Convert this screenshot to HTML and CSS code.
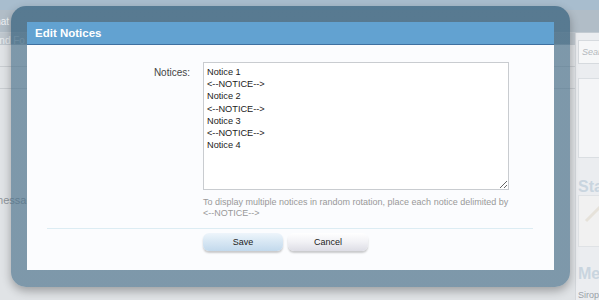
FILE: index.html
```html
<!DOCTYPE html>
<html>
<head>
<meta charset="utf-8">
<title>Edit Notices</title>
<link rel="stylesheet" href="styles.css">
</head>
<body>
<div class="page">
  <div class="hdr"></div>
  <div class="nav"><span class="tab">Chat</span></div>
  <div class="main">
    <div class="content">
      <div class="subnav">Find Fo</div>
      <div class="row"></div>
      <div class="row"></div>
      <div class="row tall"></div>
      <div class="msg">messag</div>
    </div>
    <aside class="sidebar">
      <div class="search">Search...</div>
      <div class="box"></div>
      <h3 class="sidehead">Staff Online</h3>
      <div class="box2"><svg class="pen" width="22" height="22" viewBox="0 0 22 22"><path d="M3 19 L17 5" stroke="#e6e2da" stroke-width="3" fill="none"/></svg></div>
      <h3 class="sidehead">Members Online</h3>
      <p class="sidetext">Siropu</p>
    </aside>
  </div>
</div>

<div class="overlay">
  <div class="dialog">
    <h2 class="title">Edit Notices</h2>
    <div class="body">
      <div class="field">
        <label class="label" for="notices">Notices:</label>
        <div class="ctrl">
          <textarea id="notices" class="ta">Notice 1
&lt;--NOTICE--&gt;
Notice 2
&lt;--NOTICE--&gt;
Notice 3
&lt;--NOTICE--&gt;
Notice 4</textarea>
          <p class="hint">To display multiple notices in random rotation, place each notice delimited by <span class="nw">&lt;--NOTICE--&gt;</span></p>
        </div>
      </div>
      <div class="sep"></div>
      <div class="buttons">
        <button class="btn save">Save</button>
        <button class="btn cancel">Cancel</button>
      </div>
    </div>
  </div>
</div>
</body>
</html>
```

FILE: styles.css
```css
html, body {
  margin: 0;
  padding: 0;
}
body {
  width: 599px;
  height: 300px;
  overflow: hidden;
  position: relative;
  background: #e2e5e8;
  font-family: "Liberation Sans", Arial, sans-serif;
}
.page {
  width: 599px;
  height: 300px;
  overflow: hidden;
}
.hdr {
  height: 10px;
  background: #a8bdce;
}
.nav {
  height: 23px;
  background: #b1bdc7;
  display: flex;
  align-items: center;
  font-size: 10px;
  color: #eef2f5;
  border-bottom: 1px solid #c3cbd2;
  box-sizing: border-box;
}
.tab { margin-left: -12px; }
.main {
  display: flex;
  height: 267px;
}
.content {
  flex: 0 0 575px;
  background: #e0e3e6;
}
.subnav {
  height: 12px;
  background: #bfc7ce;
  font-size: 10px;
  line-height: 16px;
  overflow: hidden;
  color: #e9edf0;
  text-indent: -9px;
}
.row {
  height: 21px;
  border-bottom: 1px solid #c9cdd1;
}
.row.tall { height: 104px; border-bottom: none; }
.msg {
  margin-left: -6px;
  font-size: 11px;
  color: #8f959b;
  line-height: 14px;
}
.sidebar {
  flex: 0 0 200px;
  background: #ebedf0;
  border-left: 1px solid #d4d8dc;
  padding: 7px 0 0 2px;
  box-sizing: border-box;
}
.search {
  height: 24px;
  width: 180px;
  box-sizing: border-box;
  border: 1px solid #d6dade;
  background: #f6f7f8;
  font-size: 9px;
  font-style: italic;
  color: #b3b8bd;
  line-height: 22px;
  padding-left: 3px;
}
.box {
  margin-top: 14px;
  height: 80px;
  width: 180px;
  box-sizing: border-box;
  border: 1px solid #dadee2;
  background: #f4f5f7;
}
.sidehead {
  margin: 21px 0 0;
  font-size: 16px;
  font-weight: bold;
  color: #c9d5df;
  line-height: 16px;
}
.box2 {
  margin-top: 0;
  height: 52px;
  width: 180px;
  box-sizing: border-box;
  border: 1px solid #dfe2e5;
  background: #f1f1f1;
  padding: 6px 4px;
}
.box2 + .sidehead { margin-top: 19px; }
.pen { display: block; }
.sidetext {
  margin: 8px 0 0;
  font-size: 9px;
  color: #9aa1a8;
}

/* overlay */
.overlay {
  position: absolute;
  left: 11px;
  top: 6px;
  width: 559px;
  height: 281px;
  box-sizing: border-box;
  padding: 16px 16px 17px;
  border-radius: 15px;
  background: linear-gradient(to bottom, rgba(40, 86, 116, 0.65) 0, rgba(40, 86, 116, 0.65) 38px, rgba(73, 112, 138, 0.65) 39px, rgba(73, 112, 138, 0.65) 100%);
  box-shadow: 0 4px 10px rgba(0, 0, 0, 0.3);
}
.dialog {
  height: 248px;
  background: #fbfcfe;
  display: flex;
  flex-direction: column;
}
.title {
  margin: 0;
  height: 23px;
  box-sizing: border-box;
  background: #62a2d1;
  border-bottom: 1px solid #3e70a0;
  color: #fff;
  font-size: 11.5px;
  font-weight: bold;
  line-height: 22px;
  padding-left: 8px;
}
.body {
  padding: 17px 0 0;
}
.field {
  display: flex;
  gap: 13px;
}
.label {
  flex: 0 0 163px;
  text-align: right;
  font-size: 10px;
  color: #444;
  padding-top: 5px;
}
.ctrl {
  width: 306px;
}
.ta {
  display: block;
  width: 306px;
  height: 128px;
  box-sizing: border-box;
  margin: 0;
  border: 1px solid #c9ccd0;
  background: #fff;
  padding: 3px 3px;
  font-family: "Liberation Sans", Arial, sans-serif;
  font-size: 9.2px;
  line-height: 12.2px;
  color: #222;
  outline: none;
}
.hint {
  margin: 7px 0 0;
  font-size: 9px;
  line-height: 11px;
  color: #999;
}
.nw { white-space: nowrap; }
.sep {
  margin: 9px 21px 0 20px;
  height: 1px;
  background: #dcecf3;
}
.buttons {
  display: flex;
  gap: 5px;
  margin: 4px 0 0 176px;
}
.btn {
  width: 80px;
  height: 18px;
  border: none;
  border-radius: 6px;
  font-family: "Liberation Sans", Arial, sans-serif;
  font-size: 9px;
  color: #222;
  padding: 0;
  box-shadow: 0 2px 2px rgba(0, 0, 0, 0.2);
}
.save {
  background: linear-gradient(to bottom, #eef5fb 0, #d9e8f4 45%, #c2d9ec 100%);
}
.cancel {
  background: linear-gradient(to bottom, #ffffff 0, #f1f1f5 50%, #dddde5 100%);
}
```
